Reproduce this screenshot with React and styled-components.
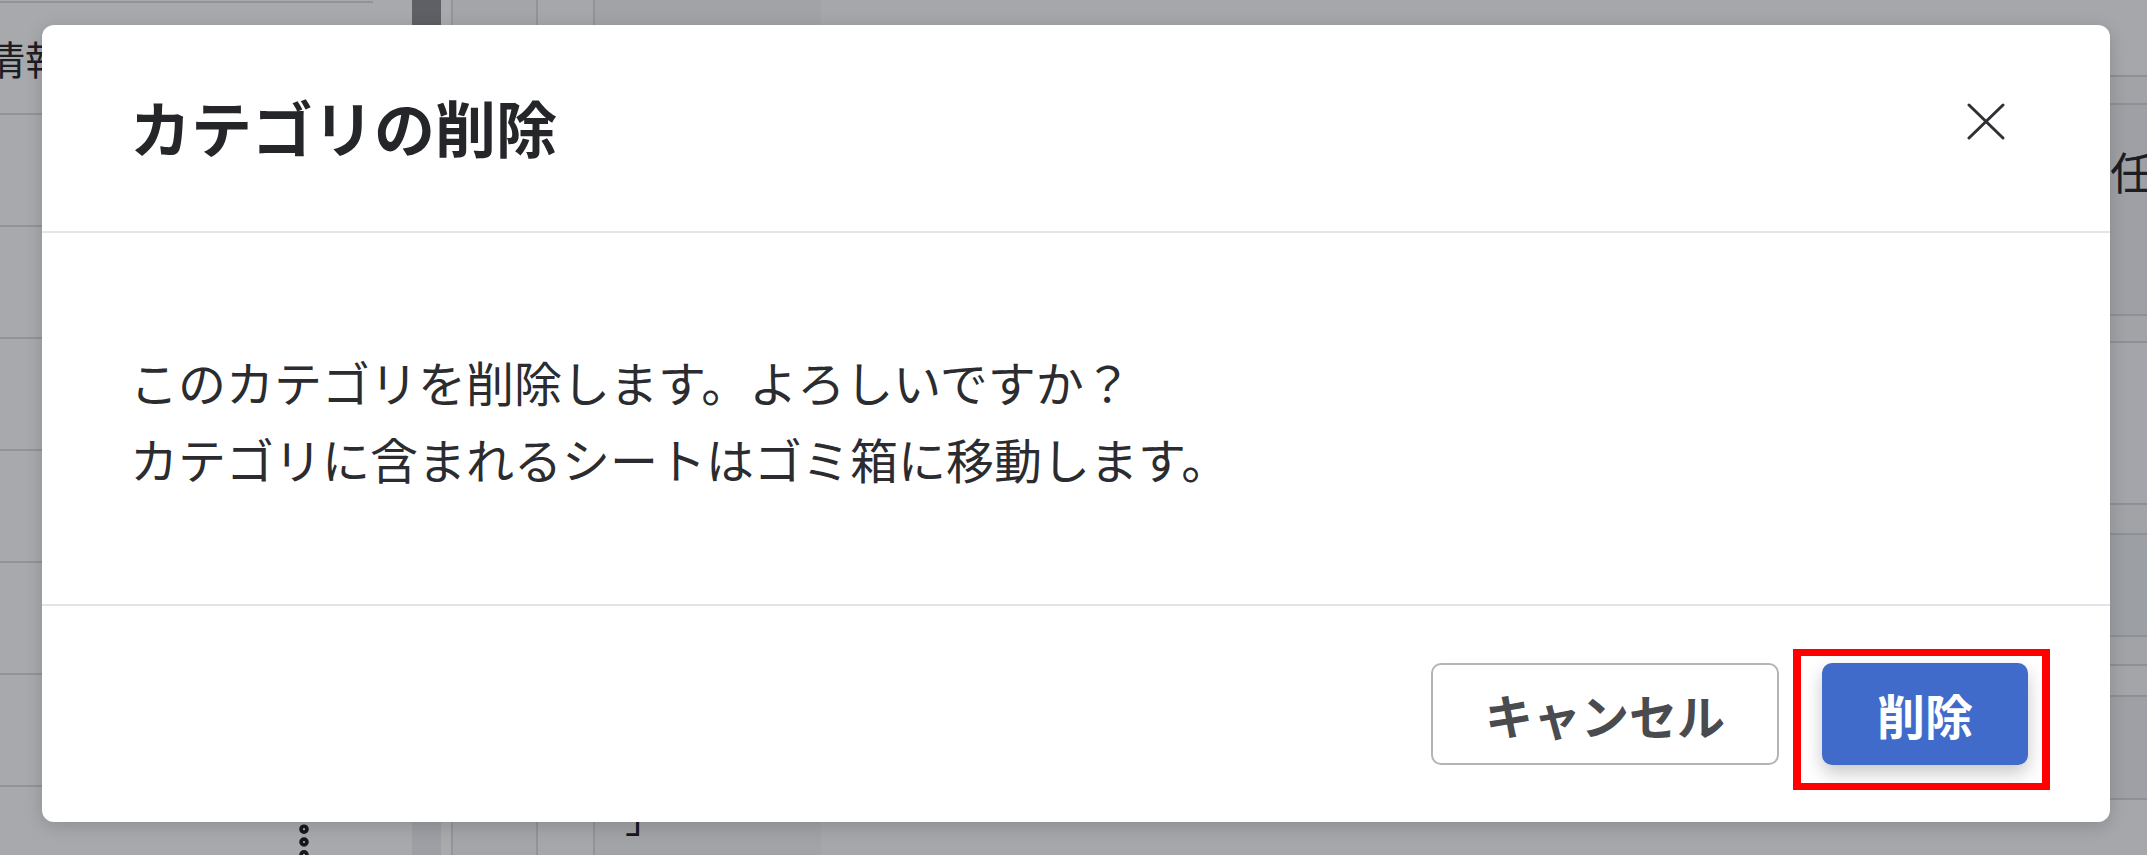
import React from "react";
import styled, { createGlobalStyle } from "styled-components";
import { EllipsisVertical } from "lucide-react";

const Global = createGlobalStyle`
  html, body { margin: 0; padding: 0; }
  body {
    width: 2147px;
    height: 855px;
    overflow: hidden;
    font-family: "Noto Sans CJK JP", "Noto Sans", sans-serif;
    color: #333;
  }
  * { box-sizing: border-box; }
`;

/* ---------- background app (under the modal overlay) ---------- */

const Stage = styled.div`
  position: relative;
  width: 2147px;
  height: 855px;
  overflow: hidden;
`;

const AppLayer = styled.div`
  display: flex;
  width: 100%;
  height: 100%;
  background: #fdfdfe;
`;

const Sidebar = styled.aside`
  display: flex;
  width: 441px;
  flex-shrink: 0;
  overflow: hidden;
`;

const SideList = styled.div`
  width: 373px;
  margin: 1px 39px 0 0;
  border-top: 2px solid #dcdde0;
  display: flex;
  flex-direction: column;
`;

const SideRow = styled.div`
  height: 112px;
  flex-shrink: 0;
  border-bottom: 2px solid #dcdde0;
  display: flex;
  align-items: center;
  padding-right: 47px;
`;

const SideLabel = styled.span`
  margin-left: -15px;
  font-size: 40px;
  color: #2b2b2e;
  white-space: nowrap;
`;

const Kebab = styled.span`
  margin-left: auto;
  display: flex;
  color: #222;
`;

const ScrollTrack = styled.div`
  width: 29px;
  flex-shrink: 0;
  background: #eeeff1;
`;

const ScrollThumb = styled.div`
  height: 190px;
  background: #8e8f92;
`;

const Gutter = styled.div`
  width: 12px;
  flex-shrink: 0;
  background: #ffffff;
  border-right: 2px solid #dedfe2;
`;

const Column = styled.div`
  width: ${(p) => p.$w}px;
  flex-shrink: 0;
  background: ${(p) => p.$bg};
  border-right: 2px solid #dcdde0;
`;

const Main = styled.main`
  flex: 1;
  display: flex;
`;

const MainPane = styled.div`
  flex: ${(p) => (p.$grow ? 1 : "none")};
  width: ${(p) => (p.$w ? `${p.$w}px` : "auto")};
  background: ${(p) => p.$bg};
  display: flex;
  align-items: flex-end;
  padding: 0 0 20px 30px;
  font-size: 40px;
  line-height: 1;
  color: #222;
`;

const RightPane = styled.div`
  width: 37px;
  flex-shrink: 0;
  display: flex;
  flex-direction: column;
  overflow: hidden;
`;

const PaneRow = styled.div`
  height: ${(p) => p.$h}px;
  flex-shrink: 0;
  background: ${(p) => p.$bg};
  border-bottom: 2px solid #d7d8db;
  padding-top: ${(p) => p.$pt || 0}px;
  font-size: 44px;
  line-height: 1;
  color: #2b2b2e;
  white-space: nowrap;
`;

const Overlay = styled.div`
  position: absolute;
  inset: 0;
  background: rgba(4, 6, 14, 0.34);
`;

/* ---------- modal dialog ---------- */

const Dialog = styled.section`
  position: absolute;
  left: 42px;
  top: 25px;
  width: 2068px;
  background: #ffffff;
  border-radius: 12px;
  box-shadow: 0 4px 18px rgba(0, 0, 0, 0.16);
  display: flex;
  flex-direction: column;
`;

const Header = styled.header`
  height: 208px;
  padding: 0 88px;
  display: flex;
  align-items: center;
  justify-content: space-between;
  border-bottom: 2px solid #e3e4e8;
`;

const Title = styled.h2`
  margin: 0 0 4px;
  font-size: 61px;
  font-weight: 700;
  line-height: 1;
  color: #25262a;
`;

const CloseButton = styled.button`
  width: 72px;
  height: 72px;
  margin: 0 0 14px;
  padding: 0;
  border: none;
  background: transparent;
  display: flex;
  align-items: center;
  justify-content: center;
  cursor: pointer;
  color: #303134;
`;

const Body = styled.div`
  padding: 110px 88px 107px;
  font-size: 48px;
  line-height: 77px;
  color: #2b2c30;
  border-bottom: 2px solid #e3e4e8;
`;

const Line = styled.p`
  margin: 0;
  white-space: nowrap;
`;

const Footer = styled.footer`
  padding: 57px 82px 57px;
  display: flex;
  justify-content: flex-end;
  align-items: center;
  gap: 43px;
`;

const Button = styled.button`
  height: 102px;
  width: ${(p) => p.$w}px;
  border-radius: 10px;
  font-family: inherit;
  font-size: 48px;
  font-weight: 700;
  line-height: 1;
  cursor: pointer;
  border: ${(p) => (p.$primary ? "none" : "2px solid #b3b4b7")};
  background: ${(p) => (p.$primary ? "#416bca" : "#ffffff")};
  color: ${(p) => (p.$primary ? "#ffffff" : "#4a4b4f")};
  box-shadow: ${(p) =>
    p.$primary ? "0 8px 18px rgba(0, 0, 0, 0.22)" : "none"};
`;

const Spot = styled.div`
  position: relative;
  display: flex;
`;

const Highlight = styled.span`
  position: absolute;
  top: -14px;
  bottom: -25px;
  left: -29px;
  right: -22px;
  border-style: solid;
  border-color: #ff0000;
  border-width: 7px 8px;
  pointer-events: none;
`;

const CloseIcon = () => (
  <svg width="38" height="37" viewBox="0 0 38 37" fill="none">
    <path
      d="M2 2 L36 35 M36 2 L2 35"
      stroke="currentColor"
      strokeWidth="3"
      strokeLinecap="round"
    />
  </svg>
);

const rightRows = [
  { h: 77, bg: "#fbfbfc" },
  { h: 28, bg: "#f3f4f6" },
  { h: 211, bg: "#eef0f3", pt: 44, text: "任" },
  { h: 27, bg: "#f3f4f6" },
  { h: 162, bg: "#f8f8fa" },
  { h: 30, bg: "#f3f4f6" },
  { h: 102, bg: "#eceef1" },
  { h: 29, bg: "#f3f4f6" },
  { h: 31, bg: "#f6f7f8" },
  { h: 103, bg: "#eef0f3" },
  { h: 60, bg: "#fbfbfc" },
];

export default function App() {
  return (
    <>
      <Global />
      <Stage>
        <AppLayer>
          <Sidebar>
            <SideList>
              <SideRow>
                <SideLabel>情報</SideLabel>
              </SideRow>
              <SideRow />
              <SideRow />
              <SideRow />
              <SideRow />
              <SideRow />
              <SideRow />
              <SideRow>
                <Kebab>
                  <EllipsisVertical size={44} strokeWidth={3.2} />
                </Kebab>
              </SideRow>
            </SideList>
            <ScrollTrack>
              <ScrollThumb />
            </ScrollTrack>
          </Sidebar>
          <Gutter />
          <Column $w={85} $bg="#f7f7f9" />
          <Column $w={57} $bg="#fbfbfc" />
          <Main>
            <MainPane $w={226} $bg="#f3f4f6">」</MainPane>
            <MainPane $grow $bg="#fbfbfc" />
          </Main>
          <RightPane>
            {rightRows.map((r, i) => (
              <PaneRow key={i} $h={r.h} $bg={r.bg} $pt={r.pt}>
                {r.text}
              </PaneRow>
            ))}
          </RightPane>
        </AppLayer>
        <Overlay />
        <Dialog role="dialog" aria-modal="true">
          <Header>
            <Title>カテゴリの削除</Title>
            <CloseButton aria-label="閉じる">
              <CloseIcon />
            </CloseButton>
          </Header>
          <Body>
            <Line>このカテゴリを削除します。よろしいですか？</Line>
            <Line>カテゴリに含まれるシートはゴミ箱に移動します。</Line>
          </Body>
          <Footer>
            <Button $w={348}>キャンセル</Button>
            <Spot>
              <Button $primary $w={206}>
                削除
              </Button>
              <Highlight />
            </Spot>
          </Footer>
        </Dialog>
      </Stage>
    </>
  );
}
